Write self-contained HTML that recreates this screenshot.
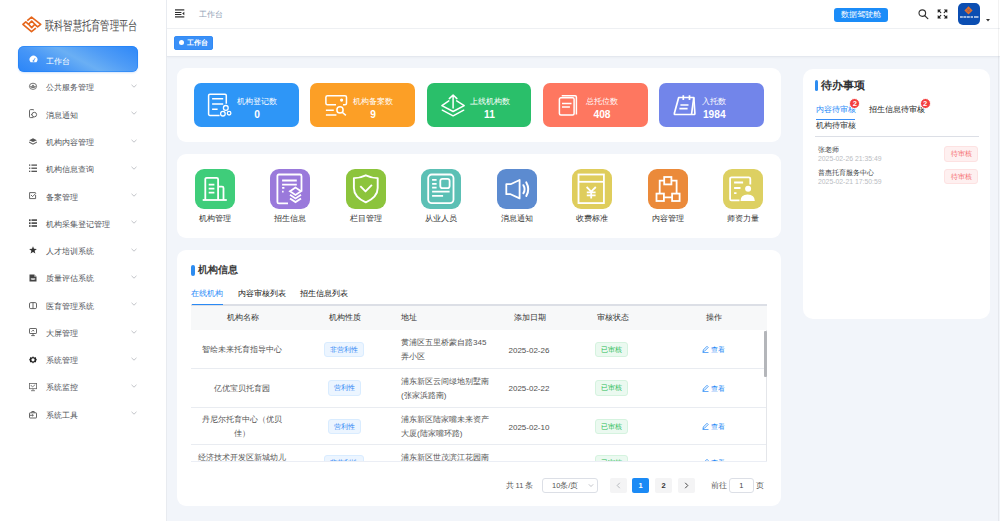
<!DOCTYPE html>
<html><head><meta charset="utf-8">
<style>
*{margin:0;padding:0;box-sizing:border-box}
html,body{width:1000px;height:521px;overflow:hidden;background:#f2f5fa;font-family:"Liberation Sans",sans-serif;color:#606266}
.a{position:absolute}
.t{position:absolute;white-space:nowrap;line-height:1}
/* sidebar */
#side{position:absolute;left:0;top:0;width:167px;height:521px;background:#fff;border-right:1px solid #e8ebf0}
.logo-t{left:45px;top:18.8px;font-size:13px;font-weight:500;color:#4a4a4a;transform:scaleX(0.71);transform-origin:left top;letter-spacing:0px}
.act{left:18px;top:45.8px;width:120px;height:26.5px;border-radius:6px;background:linear-gradient(28deg,#2a85f8 0%,#4696f7 28%,#6aaff4 50%,#4f9cf6 70%,#2d87f8 100%);box-shadow:inset 0 0 0 0.7px rgba(25,125,250,.7),0 1px 2px rgba(30,120,240,.2)}
.mi{position:absolute;left:46px;font-size:8px;color:#505359;font-weight:500;line-height:1;white-space:nowrap}
.chev{position:absolute;left:131px;width:6px;height:6px}
.ic{position:absolute;left:29.1px;width:8px;height:9px}
/* header */
#hdr{position:absolute;left:167px;top:0;width:833px;height:29px;background:#fff;border-bottom:1px solid #eef0f3}
#tags{position:absolute;left:167px;top:29px;width:833px;height:28px;background:#fff;border-bottom:1px solid #e4e8ef;box-shadow:0 1px 2px rgba(0,0,0,.03)}
.card{position:absolute;background:#fff;border-radius:9px}
.stat{position:absolute;top:83px;width:104.5px;height:44px;border-radius:7px}
.stat .sb{position:absolute;left:43px;top:15.1px;text-align:center}
.stat .lb{font-size:8px;color:#fff;line-height:1;white-space:nowrap;height:11.5px}
.stat .v{font-size:10.2px;font-weight:bold;color:#fff;line-height:1;white-space:nowrap}
.stat svg{position:absolute;left:14px;top:11px;overflow:visible}
.ql{position:absolute;top:168.5px;width:40px;height:40px;border-radius:9px}
.ql svg{position:absolute;left:0;top:0}
.qlt{position:absolute;top:215px;width:60px;text-align:center;font-size:8px;color:#333;font-weight:500;line-height:1;white-space:nowrap}
.th{position:absolute;top:313.6px;font-size:7.5px;color:#333;line-height:1;white-space:nowrap;font-weight:500}
.td{position:absolute;font-size:8px;color:#555;line-height:13.7px;white-space:nowrap}
.tg{position:absolute;height:15.5px;border-radius:3px;font-size:7px;line-height:13.5px;text-align:center;white-space:nowrap}
.tgb{background:#ecf5ff;border:1px solid #d9ecff;color:#2f87f5;font-weight:500}
.tgg{background:#ebf9f0;border:1px solid #d5f3df;color:#1fbb55;font-weight:500}
.op{position:absolute;font-size:7px;color:#2689f6;line-height:1;white-space:nowrap}
.rowl{position:absolute;left:191px;width:576px;height:1px;background:#e9ecf1}
.pb{position:absolute;top:477.5px;height:15.5px;width:17px;border-radius:2px;background:#f4f4f5;font-size:7.5px;font-weight:bold;line-height:15.5px;text-align:center;color:#333}
</style></head><body>

<div id="side">
  <svg class="a" style="left:0;top:0" width="50" height="40" viewBox="0 0 50 40"><g fill="none" stroke="#e5661c" stroke-width="1.65" stroke-linejoin="round"><path d="M27.3 20.7L31.5 17.2L40.7 24.4L37.6 26.8L34.8 24.3"/><path d="M35.9 28.05L31.5 31.6L22.9 24.3L25.8 21.9L28.6 24.3"/><path d="M31.7 21.0L34.8 24.3L31.7 27.6L28.6 24.3Z"/></g></svg>
  <div class="t logo-t">联科智慧托育管理平台</div>
  <div class="a act"></div>
  <svg class="a" style="left:28.8px;top:55.3px" width="9" height="8" viewBox="0 0 9 8"><path d="M1.6 7.2A3.9 3.9 0 1 1 7.4 7.2Z" fill="#fff"/><path d="M4.5 5.8L6.1 3.2" stroke="#4a98f6" stroke-width="0.9"/><circle cx="4.5" cy="5.9" r="0.9" fill="#4a98f6"/></svg>
  <div class="mi" style="left:46px;top:56.6px;color:#fff;font-size:8.4px">工作台</div>
  <div class="mi" style="top:84.4px">公共服务管理</div>
  <svg class="chev" style="top:83.1px" viewBox="0 0 6 6"><path d="M0.5 1.8 L3 4.2 L5.5 1.8" fill="none" stroke="#a8abb2" stroke-width="0.7"/></svg>
  <svg class="ic" style="top:83.1px" viewBox="0 0 8 9" width="8" height="9" overflow="visible"><ellipse cx="4" cy="3.3" rx="3.6" ry="3.1" fill="none" stroke="#666" stroke-width="0.9"/><path d="M1 3.3H7V3.8Q4 6.3 1 3.8Z" fill="#666"/><path d="M4 1.5L5.3 3.1H2.7Z" fill="#666"/></svg>
  <div class="mi" style="top:111.7px">消息通知</div>
  <svg class="chev" style="top:110.4px" viewBox="0 0 6 6"><path d="M0.5 1.8 L3 4.2 L5.5 1.8" fill="none" stroke="#a8abb2" stroke-width="0.7"/></svg>
  <svg class="ic" style="top:109.2px" viewBox="0 0 8 9" width="8" height="9" overflow="visible"><g fill="none" stroke="#555" stroke-width="0.9"><path d="M5 1.2L4.2 0.6H1.6Q0.5 0.6 0.5 1.7V7.8Q0.5 8.6 1.4 8.6H4.5"/><circle cx="5.3" cy="5.6" r="2.3"/><path d="M2 5.6H3"/></g></svg>
  <div class="mi" style="top:138.9px">机构内容管理</div>
  <svg class="chev" style="top:137.6px" viewBox="0 0 6 6"><path d="M0.5 1.8 L3 4.2 L5.5 1.8" fill="none" stroke="#a8abb2" stroke-width="0.7"/></svg>
  <svg class="ic" style="top:137.6px" viewBox="0 0 8 9" width="8" height="9" overflow="visible"><path d="M4 0.3L7.9 2.2L4 4.1L0.1 2.2Z" fill="#555"/><path d="M0.1 3.6L4 5.5L7.9 3.6V4.8L4 6.7L0.1 4.8Z" fill="#666"/></svg>
  <div class="mi" style="top:166.2px">机构信息查询</div>
  <svg class="chev" style="top:164.9px" viewBox="0 0 6 6"><path d="M0.5 1.8 L3 4.2 L5.5 1.8" fill="none" stroke="#a8abb2" stroke-width="0.7"/></svg>
  <svg class="ic" style="top:164.1px" viewBox="0 0 8 9" width="8" height="9" overflow="visible"><g fill="#444"><rect x="0" y="0.5" width="1.3" height="1.2"/><rect x="2.4" y="0.5" width="5.6" height="1.2"/><rect x="0" y="3.6" width="1.3" height="1.2"/><rect x="2.4" y="3.6" width="5.6" height="1.2"/><rect x="0" y="6.7" width="1.3" height="1.2"/><rect x="2.4" y="6.7" width="5.6" height="1.2"/></g></svg>
  <div class="mi" style="top:193.5px">备案管理</div>
  <svg class="chev" style="top:192.2px" viewBox="0 0 6 6"><path d="M0.5 1.8 L3 4.2 L5.5 1.8" fill="none" stroke="#a8abb2" stroke-width="0.7"/></svg>
  <svg class="ic" style="top:192.2px" viewBox="0 0 8 9" width="8" height="9" overflow="visible"><g fill="none" stroke="#555" stroke-width="0.9"><path d="M6.6 0.6H0.6V6.6H6.6V3"/><path d="M2 3L3.6 4.6L7 1.2"/></g></svg>
  <div class="mi" style="top:220.7px">机构采集登记管理</div>
  <svg class="chev" style="top:219.4px" viewBox="0 0 6 6"><path d="M0.5 1.8 L3 4.2 L5.5 1.8" fill="none" stroke="#a8abb2" stroke-width="0.7"/></svg>
  <svg class="ic" style="top:219.1px" viewBox="0 0 8 9" width="8" height="9" overflow="visible"><g fill="#444"><rect x="0" y="0.3" width="1.6" height="1.8"/><rect x="2.5" y="0.3" width="5.5" height="1.6"/><rect x="0" y="3.3" width="1.6" height="1.8"/><rect x="2.5" y="3.3" width="5.5" height="1.6"/><rect x="0" y="6.2" width="1.6" height="1.6"/><rect x="2.5" y="6.2" width="5.5" height="1.6"/></g></svg>
  <div class="mi" style="top:248.0px">人才培训系统</div>
  <svg class="chev" style="top:246.7px" viewBox="0 0 6 6"><path d="M0.5 1.8 L3 4.2 L5.5 1.8" fill="none" stroke="#a8abb2" stroke-width="0.7"/></svg>
  <svg class="ic" style="top:246px" viewBox="0 0 8 9" width="8" height="9" overflow="visible"><path d="M4 0.2L5 2.8L7.9 2.9L5.6 4.7L6.4 7.5L4 5.9L1.6 7.5L2.4 4.7L0.1 2.9L3 2.8Z" fill="#333"/></svg>
  <div class="mi" style="top:275.3px">质量评估系统</div>
  <svg class="chev" style="top:274.0px" viewBox="0 0 6 6"><path d="M0.5 1.8 L3 4.2 L5.5 1.8" fill="none" stroke="#a8abb2" stroke-width="0.7"/></svg>
  <svg class="ic" style="top:274.2px" viewBox="0 0 8 9" width="8" height="9" overflow="visible"><path d="M0.5 0.5H5.3L7.5 2.7V7.5H0.5Z" fill="#444"/><path d="M1.8 4.3H6.2V5.6Q4 6.4 1.8 5.6Z" fill="#ddd"/><path d="M5.3 0.5V2.7H7.5" fill="#bbb"/></svg>
  <div class="mi" style="top:302.6px">医育管理系统</div>
  <svg class="chev" style="top:301.3px" viewBox="0 0 6 6"><path d="M0.5 1.8 L3 4.2 L5.5 1.8" fill="none" stroke="#a8abb2" stroke-width="0.7"/></svg>
  <svg class="ic" style="top:301.6px" viewBox="0 0 8 9" width="8" height="9" overflow="visible"><g fill="none" stroke="#555" stroke-width="0.9"><rect x="0.5" y="0.6" width="7" height="6" rx="1.3"/><path d="M4 0.6V6.6"/></g></svg>
  <div class="mi" style="top:329.8px">大屏管理</div>
  <svg class="chev" style="top:328.5px" viewBox="0 0 6 6"><path d="M0.5 1.8 L3 4.2 L5.5 1.8" fill="none" stroke="#a8abb2" stroke-width="0.7"/></svg>
  <svg class="ic" style="top:328.2px" viewBox="0 0 8 9" width="8" height="9" overflow="visible"><g fill="none" stroke="#555" stroke-width="0.9"><rect x="0.5" y="0.5" width="7" height="5" rx="0.6"/><path d="M4 5.5V7.4M2.2 7.6H5.8M2.6 3.6L4 2.2L5.2 3.2"/></g></svg>
  <div class="mi" style="top:357.1px">系统管理</div>
  <svg class="chev" style="top:355.8px" viewBox="0 0 6 6"><path d="M0.5 1.8 L3 4.2 L5.5 1.8" fill="none" stroke="#a8abb2" stroke-width="0.7"/></svg>
  <svg class="ic" style="top:355.8px" viewBox="0 0 8 9" width="8" height="9" overflow="visible"><path d="M4 0.2L5 1.4L6.9 1.3L7.2 3.1L8 3.8L7.2 4.5L6.9 6.3L5 6.2L4 7.4L3 6.2L1.1 6.3L0.8 4.5L0 3.8L0.8 3.1L1.1 1.3L3 1.4Z" fill="#222"/><circle cx="4" cy="3.8" r="1.6" fill="#fff"/></svg>
  <div class="mi" style="top:384.4px">系统监控</div>
  <svg class="chev" style="top:383.1px" viewBox="0 0 6 6"><path d="M0.5 1.8 L3 4.2 L5.5 1.8" fill="none" stroke="#a8abb2" stroke-width="0.7"/></svg>
  <svg class="ic" style="top:382.8px" viewBox="0 0 8 9" width="8" height="9" overflow="visible"><g fill="none" stroke="#666" stroke-width="0.8"><rect x="0.4" y="0.5" width="7.2" height="5.2"/><path d="M4 5.7V7.6M2 7.7H6M1.8 2L3.5 4L6.2 1.6"/></g></svg>
  <div class="mi" style="top:411.6px">系统工具</div>
  <svg class="chev" style="top:410.3px" viewBox="0 0 6 6"><path d="M0.5 1.8 L3 4.2 L5.5 1.8" fill="none" stroke="#a8abb2" stroke-width="0.7"/></svg>
  <svg class="ic" style="top:410.6px" viewBox="0 0 8 9" width="8" height="9" overflow="visible"><g fill="none" stroke="#555" stroke-width="0.9"><rect x="0.5" y="1.8" width="7" height="5.2" rx="0.5"/><path d="M2.8 1.8V0.5H5.2V1.8"/><path d="M1 4.3H4.3M3.3 3.4L4.3 4.3L3.3 5.2"/></g></svg>
</div>


<div id="hdr">
  <svg class="a" style="left:8.1px;top:9px" width="10" height="9" viewBox="0 0 10 9"><g fill="#2b2b2b"><rect x="0" y="0.3" width="9.3" height="1.2"/><rect x="0" y="3" width="6.4" height="1"/><rect x="0" y="5" width="6.4" height="1"/><rect x="0" y="7.3" width="9.3" height="1.2"/><path d="M9.3 2.7L7.2 4.5L9.3 6.3Z"/></g></svg>
  <div class="t" style="left:32px;top:11px;font-size:8px;color:#90a0b5">工作台</div>
  <div class="a" style="left:667.3px;top:7.7px;width:53.5px;height:14.5px;border-radius:3px;background:#1b8cf8"></div>
  <div class="t" style="left:673.5px;top:11px;font-size:8px;color:#fff;font-weight:500">数据驾驶舱</div>
  <svg class="a" style="left:751px;top:9px" width="11" height="11" viewBox="0 0 11 11"><circle cx="4.3" cy="4.1" r="3.3" fill="none" stroke="#333" stroke-width="1.15"/><path d="M6.7 6.6 L9.8 9.6" stroke="#333" stroke-width="1.3" stroke-linecap="round"/></svg>
  <svg class="a" style="left:770px;top:9.3px" width="11" height="10" viewBox="0 0 11 10"><g fill="#222"><path d="M0.6 0.4L4.2 0.6L0.8 4Z"/><path d="M10.4 0.4L6.8 0.6L10.2 4Z"/><path d="M0.6 9.6L4.2 9.4L0.8 6Z"/><path d="M10.4 9.6L6.8 9.4L10.2 6Z"/></g><g stroke="#222" stroke-width="1.1" stroke-linecap="round"><path d="M1.8 1.6L3.8 3.6M9.2 1.6L7.2 3.6M1.8 8.4L3.8 6.4M9.2 8.4L7.2 6.4"/></g></svg>
  <div class="a" style="left:790.5px;top:3px;width:22.3px;height:22.3px;border-radius:5px;background:#0b4eb2"></div>
  <svg class="a" style="left:797px;top:5.8px" width="9" height="9" viewBox="0 0 9 9"><path d="M4.5 0.2 L8.6 4.4 L4.5 8.6 L0.4 4.4Z" fill="#e0702e"/><path d="M2.5 2.4L6.5 6.4M6.5 2.4L2.5 6.4" stroke="#8a5a60" stroke-width="0.5"/><path d="M4.5 2.9L6 4.4L4.5 5.9L3 4.4Z" fill="none" stroke="#9a5a50" stroke-width="0.5"/></svg>
  <svg class="a" style="left:792.5px;top:15.6px" width="19" height="2.5" viewBox="0 0 19 2.5"><g fill="rgba(255,255,255,.6)"><rect x="0" y="0" width="2.8" height="2"/><rect x="3.4" y="0" width="2.6" height="2"/><rect x="6.6" y="0" width="3.2" height="2"/><rect x="10.6" y="0" width="2.4" height="2"/><rect x="14" y="0" width="4.5" height="2"/></g></svg>
  <svg class="a" style="left:819px;top:19.3px" width="4" height="2.5" viewBox="0 0 4 2.5"><path d="M0 0H4L2 2.5Z" fill="#333"/></svg>
</div>
<div id="tags">
  <div class="a" style="left:7.3px;top:6.8px;width:38.5px;height:14.2px;border-radius:3px;background:#3a90f7;box-shadow:inset 0 0 0 0.6px #2b86f5"></div>
  <div class="a" style="left:12px;top:11.2px;width:5px;height:5px;border-radius:50%;background:#fff"></div>
  <div class="t" style="left:20px;top:10.2px;font-size:7.2px;color:#fff;font-weight:bold">工作台</div>
</div>
</div>

<!-- stats card -->
<div class="card" style="left:177px;top:68px;width:603.6px;height:74px"></div>
<div class="stat" style="left:194px;background:#2e96f7">
  <svg width="24" height="24" viewBox="0 0 24 24"><g fill="none" stroke="#fff" stroke-width="1.5"><path d="M11.6 21.4H1.9Q0.6 21.4 0.6 20.1V1.5Q0.6 0.3 1.9 0.3H17Q18.3 0.3 18.3 1.5V9.7"/><path d="M4.1 4.8H15.2M4.1 10H15.2M4.1 15.2H9.6"/><circle cx="17.8" cy="13.9" r="2.4" stroke-width="1.3"/><circle cx="14.9" cy="19.7" r="2.3" stroke-width="1.3"/><circle cx="21.1" cy="19.2" r="1.8" stroke-width="1.3"/></g></svg>
  <div class="sb"><div class="lb">机构登记数</div><div class="v">0</div></div></div>
<div class="stat" style="left:310.2px;background:#fc9f26">
  <svg width="24" height="24" viewBox="0 0 24 24"><g fill="none" stroke="#fff" stroke-width="1.5"><path d="M12 10.7H3.4Q1.9 10.7 1.9 9.2V3.2Q1.9 1.7 3.4 1.7H21Q22.5 1.7 22.5 3.2V9.2Q22.5 10.7 21 10.7H19"/><path d="M1.9 16.2H9.8M1.9 21.1H12.4"/><circle cx="16" cy="15.9" r="3.1"/><path d="M18.2 18.2L21.9 21.4"/></g><circle cx="17.6" cy="6.1" r="1.6" fill="#fff"/></svg>
  <div class="sb"><div class="lb">机构备案数</div><div class="v">9</div></div></div>
<div class="stat" style="left:426.5px;background:#2abf6a">
  <svg width="24" height="24" viewBox="0 0 24 24"><g fill="none" stroke="#fff" stroke-width="1.5" stroke-linejoin="round" stroke-linecap="round"><path d="M7.8 6.9L0.9 11.6L12.1 17.5L23.2 11.6L15.7 6.9"/><path d="M1.3 16.2L12.1 21.8L22.7 16.2"/><path d="M12.1 1.2V13.9M8.3 4.6L12.1 1L15.9 4.6"/></g></svg>
  <div class="sb"><div class="lb">上线机构数</div><div class="v">11</div></div></div>
<div class="stat" style="left:543px;background:#fe7760">
  <svg width="24" height="24" viewBox="0 0 24 24"><g fill="none" stroke="#fff" stroke-width="1.5"><path d="M4.7 1.8H18.2Q19.4 1.8 19.4 3V20.5"/><rect x="2.4" y="3.8" width="14.7" height="17.3" rx="1.5"/><path d="M5 9.4H14.5M5 12.9H12.9"/></g></svg>
  <div class="sb"><div class="lb">总托位数</div><div class="v">408</div></div></div>
<div class="stat" style="left:659.3px;background:#7285ea">
  <svg width="24" height="24" viewBox="0 0 24 24"><g fill="none" stroke="#fff" stroke-width="1.7" stroke-linejoin="round"><path d="M5.7 3.5H20.8L21.9 19.5Q22 20.5 21 20.5H2.2Q1 20.5 1.3 19.5Z"/><path d="M20.8 3.5L18.5 20.5"/><path d="M10.3 1.2V6.1M16.5 1.2V6.1"/><path d="M7.4 11H15.5M6.4 14.6H14.6"/></g></svg>
  <div class="sb"><div class="lb">入托数</div><div class="v">1984</div></div></div>

<!-- quick links card -->
<div class="card" style="left:177px;top:153.8px;width:603.6px;height:84px"></div>
<div class="ql" style="left:194.9px;background:#3fcd7a"><svg width="40" height="40" viewBox="0 0 40 40" class="qi0"><g fill="none" stroke="#fff" stroke-width="1.8"><path d="M10.3 31V10.3Q10.3 8.9 11.7 8.9H21.7Q23.1 8.9 23.1 10.3V31"/><path d="M23.1 17.6H27.1Q28.5 17.6 28.5 19V31"/><path d="M7.7 31H31.8"/><path d="M13.7 15.6H19.4M13.7 19.6H19.4M13.7 23.6H19.4"/></g></svg></div>
<div class="qlt" style="left:184.9px">机构管理</div>
<div class="ql" style="left:270.4px;background:#9a79db"><svg width="40" height="40" viewBox="0 0 40 40" class="qi1"><g fill="none" stroke="#fff" stroke-width="1.8"><path d="M18 34.4H8.9Q7.4 34.4 7.4 32.9V7Q7.4 5.5 8.9 5.5H30Q31.5 5.5 31.5 7V22"/><path d="M12.1 11.5H26.8M12.1 15.6H26.8M12.1 18.9H14.4M12.1 22.6H13.6"/><path d="M25.5 18.5L20 22.2L25.5 25.9L31 22.2Z"/><path d="M20 25.8L25.5 29.5L31 25.8M20 29.4L25.5 33.1L31 29.4"/></g></svg></div>
<div class="qlt" style="left:260.4px">招生信息</div>
<div class="ql" style="left:345.8px;background:#8cc43c"><svg width="40" height="40" viewBox="0 0 40 40" class="qi2"><g fill="none" stroke="#fff" stroke-width="1.9" stroke-linejoin="round"><path d="M19.8 6.3Q14 9.1 7.9 9.1V19Q7.9 28 19.8 33.4Q31.7 28 31.7 19V9.1Q25.6 9.1 19.8 6.3Z"/><path d="M14.3 17.2L19.5 22.4L25.9 15.9"/></g></svg></div>
<div class="qlt" style="left:335.8px">栏目管理</div>
<div class="ql" style="left:421.3px;background:#5cc0b5"><svg width="40" height="40" viewBox="0 0 40 40" class="qi3"><g fill="none" stroke="#fff" stroke-width="1.8"><rect x="7.2" y="5.5" width="25.3" height="28.6" rx="3.5"/><rect x="19.3" y="9.8" width="9.3" height="9.4" rx="2.2"/><path d="M11.1 10.9H15.6M11.1 14.8H15.6M11.1 18.7H15.6M11.1 22.6H28.6M11.1 26.8H22.1"/></g></svg></div>
<div class="qlt" style="left:411.3px">从业人员</div>
<div class="ql" style="left:496.7px;background:#5c8bd0"><svg width="40" height="40" viewBox="0 0 40 40" class="qi4"><g fill="none" stroke="#fff" stroke-width="1.8" stroke-linejoin="round" stroke-linecap="round"><path d="M9.3 15.2H13.6L22.6 11V29.4L13.6 25.2H9.3Z"/><path d="M26.4 16.2Q28.8 20.2 26.4 24.2" stroke-width="2"/><path d="M29.3 13.4Q33.2 20.2 29.3 27" stroke-width="2"/></g></svg></div>
<div class="qlt" style="left:486.7px">消息通知</div>
<div class="ql" style="left:572.2px;background:#dfcd5c"><svg width="40" height="40" viewBox="0 0 40 40" class="qi5"><g fill="none" stroke="#fff" stroke-width="1.8"><rect x="6.5" y="5.5" width="25.4" height="28.6"/><path d="M6.5 12.8H31.9"/><path d="M14.6 18L19.2 22.6L23.8 18M19.2 22.6V29.6M14.8 23.4H23.6M14.8 26.4H23.6" stroke-width="1.8"/></g></svg></div>
<div class="qlt" style="left:562.2px">收费标准</div>
<div class="ql" style="left:647.7px;background:#eb8a3a"><svg width="40" height="40" viewBox="0 0 40 40" class="qi6"><g fill="none" stroke="#fff" stroke-width="1.8"><rect x="16.2" y="8" width="7.2" height="7.4"/><rect x="8.5" y="24.6" width="7.4" height="7.4"/><rect x="24.1" y="24.6" width="7.5" height="7.4"/><path d="M16.2 11.6H11.7V24.6M23.4 11.6H28.6V24.6M15.9 28.3H24.1"/></g></svg></div>
<div class="qlt" style="left:637.7px">内容管理</div>
<div class="ql" style="left:723.1px;background:#ddd062"><svg width="40" height="40" viewBox="0 0 40 40" class="qi7"><g fill="none" stroke="#fff" stroke-width="1.8"><path d="M16.5 31.4H8.6Q7.1 31.4 7.1 29.9V9.8Q7.1 8.3 8.6 8.3H25.8Q27.3 8.3 27.3 9.8V15.5"/><path d="M11.1 13.5H20.1M11.1 19H17.5M11.1 24.2H13.5"/></g><circle cx="25.1" cy="19.7" r="3" fill="#fff"/><path d="M17.5 32Q17.5 25.4 24.6 25.4Q31.8 25.4 31.8 32Z" fill="#fff"/></svg></div>
<div class="qlt" style="left:713.1px">师资力量</div>


<!-- table card -->
<div class="card" style="left:177px;top:250px;width:603.6px;height:256px"></div>
<div class="a" style="left:191px;top:265px;width:3.5px;height:11px;border-radius:2px;background:#2d8cf0"></div>
<div class="t" style="left:197.5px;top:265.3px;font-size:10px;font-weight:bold;color:#3a3a3a">机构信息</div>
<div class="t" style="left:191.3px;top:290.4px;font-size:8px;color:#1f8af8;font-weight:500">在线机构</div>
<div class="t" style="left:237.5px;top:290.4px;font-size:8px;color:#111;font-weight:500">内容审核列表</div>
<div class="t" style="left:299.5px;top:290.4px;font-size:8px;color:#111;font-weight:500">招生信息列表</div>
<div class="a" style="left:191px;top:304px;width:576px;height:1.5px;background:#dcdfe6"></div>
<div class="a" style="left:191.5px;top:303.6px;width:31.5px;height:1.8px;background:#2a8af5"></div>
<div class="a" style="left:191px;top:305.5px;width:576px;height:24px;background:#f7f8f9"></div>
<div class="th" style="left:227.3px">机构名称</div>
<div class="th" style="left:329.4px">机构性质</div>
<div class="th" style="left:401px">地址</div>
<div class="th" style="left:514.3px">添加日期</div>
<div class="th" style="left:596.7px">审核状态</div>
<div class="th" style="left:705.7px">操作</div>
<div class="a" style="left:191px;top:329.5px;width:576px;height:132px;overflow:hidden">
<div class="td" style="left:0;width:102px;text-align:center;top:13.5px">智绘未来托育指导中心</div>
<div class="tg tgb" style="left:132.8px;width:40.5px;top:12.0px">非营利性</div>
<div class="td" style="left:210px;top:6.8px">黄浦区五里桥蒙自路345<br>弄小区</div>
<div class="td" style="left:317.5px;top:14.0px;font-size:8px;color:#505050">2025-02-26</div>
<div class="tg tgg" style="left:403.5px;width:33px;top:12.0px">已审核</div>
<div class="op" style="left:511px;top:15.5px"><svg width="7" height="8" viewBox="0 0 7 8" style="vertical-align:-1px"><path d="M1 7L1.3 5L5 1.3L6.2 2.5L2.5 6.2Z M0.5 7.6H6.5" fill="none" stroke="#2689f6" stroke-width="0.8"/></svg> 查看</div>
<div class="rowl" style="left:0;top:38.6px"></div>
<div class="td" style="left:0;width:102px;text-align:center;top:52.0px">亿优宝贝托育园</div>
<div class="tg tgb" style="left:136.5px;width:33px;top:50.5px">营利性</div>
<div class="td" style="left:210px;top:45.3px">浦东新区云间绿地别墅南<br>(张家浜路南)</div>
<div class="td" style="left:317.5px;top:52.5px;font-size:8px;color:#505050">2025-02-22</div>
<div class="tg tgg" style="left:403.5px;width:33px;top:50.5px">已审核</div>
<div class="op" style="left:511px;top:54.0px"><svg width="7" height="8" viewBox="0 0 7 8" style="vertical-align:-1px"><path d="M1 7L1.3 5L5 1.3L6.2 2.5L2.5 6.2Z M0.5 7.6H6.5" fill="none" stroke="#2689f6" stroke-width="0.8"/></svg> 查看</div>
<div class="rowl" style="left:0;top:77.0px"></div>
<div class="td" style="left:0;width:102px;text-align:center;top:83.8px;white-space:normal">丹尼尔托育中心（优贝<br>佳）</div>
<div class="tg tgb" style="left:136.5px;width:33px;top:89.0px">营利性</div>
<div class="td" style="left:210px;top:83.8px">浦东新区陆家嘴未来资产<br>大厦(陆家嘴环路)</div>
<div class="td" style="left:317.5px;top:91.0px;font-size:8px;color:#505050">2025-02-10</div>
<div class="tg tgg" style="left:403.5px;width:33px;top:89.0px">已审核</div>
<div class="op" style="left:511px;top:92.5px"><svg width="7" height="8" viewBox="0 0 7 8" style="vertical-align:-1px"><path d="M1 7L1.3 5L5 1.3L6.2 2.5L2.5 6.2Z M0.5 7.6H6.5" fill="none" stroke="#2689f6" stroke-width="0.8"/></svg> 查看</div>
<div class="rowl" style="left:0;top:114.8px"></div>
<div class="td" style="left:0;width:102px;text-align:center;top:121.3px;white-space:normal">经济技术开发区新城幼儿<br>园</div>
<div class="tg tgb" style="left:132.8px;width:40.5px;top:125.8px">非营利性</div>
<div class="td" style="left:210px;top:121.3px">浦东新区世茂滨江花园南<br>(潍坊路)</div>
<div class="td" style="left:317.5px;top:129.5px;font-size:8px;color:#505050">2025-02-08</div>
<div class="tg tgg" style="left:403.5px;width:33px;top:125.8px">已审核</div>
<div class="op" style="left:511px;top:128.6px"><svg width="7" height="8" viewBox="0 0 7 8" style="vertical-align:-1px"><path d="M1 7L1.3 5L5 1.3L6.2 2.5L2.5 6.2Z M0.5 7.6H6.5" fill="none" stroke="#2689f6" stroke-width="0.8"/></svg> 查看</div>
<div class="rowl" style="left:0;top:154.0px"></div>
</div>
<div class="a" style="left:766px;top:329.5px;width:1px;height:132px;background:#e4e6ea"></div>
<div class="a" style="left:764.3px;top:330.5px;width:2.5px;height:46px;border-radius:1px;background:#b4b6ba"></div>
<div class="a" style="left:191px;top:461px;width:576px;height:1px;background:#ebeef5"></div>
<!-- pagination -->
<div class="t" style="left:505.5px;top:481.5px;font-size:7.5px;color:#555">共 11 条</div>
<div class="a" style="left:541.5px;top:477.5px;width:56.5px;height:15.5px;border:1px solid #dcdfe6;border-radius:3px;background:#fff"></div>
<div class="t" style="left:552px;top:481.5px;font-size:7.5px;color:#555">10条/页</div>
<svg class="a" style="left:587.5px;top:483px" width="6" height="5" viewBox="0 0 6 5"><path d="M0.8 1.3L3 3.5L5.2 1.3" fill="none" stroke="#a8abb2" stroke-width="0.7"/></svg>
<div class="pb" style="left:610px"><svg width="5" height="7" viewBox="0 0 5 7" style="margin-top:4.2px"><path d="M3.8 0.8L1.2 3.5L3.8 6.2" fill="none" stroke="#b0b3b8" stroke-width="0.9"/></svg></div>
<div class="pb" style="left:632.2px;background:#1b8af5;color:#fff">1</div>
<div class="pb" style="left:655px">2</div>
<div class="pb" style="left:677.8px"><svg width="5" height="7" viewBox="0 0 5 7" style="margin-top:4.2px"><path d="M1.2 0.8L3.8 3.5L1.2 6.2" fill="none" stroke="#333" stroke-width="0.9"/></svg></div>
<div class="t" style="left:711px;top:481.5px;font-size:7.5px;color:#555">前往</div>
<div class="a" style="left:728.5px;top:477.5px;width:25.5px;height:15.5px;border:1px solid #dcdfe6;border-radius:3px;background:#fff;font-size:7.5px;line-height:13.5px;text-align:center;color:#444">1</div>
<div class="t" style="left:756.4px;top:481.5px;font-size:7.5px;color:#555">页</div>

<!-- right card -->
<div class="card" style="left:803.3px;top:68.5px;width:186.7px;height:250px;border-radius:10px"></div>
<div class="a" style="left:815px;top:80px;width:3.4px;height:10.6px;border-radius:2px;background:#2d8cf0"></div>
<div class="t" style="left:821px;top:79.6px;font-size:10.6px;font-weight:bold;color:#303133">待办事项</div>
<div class="t" style="left:815.6px;top:105.9px;font-size:7.9px;color:#1f8af8;font-weight:500">内容待审核</div>
<div class="t" style="left:869px;top:105.9px;font-size:8px;color:#222;font-weight:500">招生信息待审核</div>
<div class="a" style="left:849.4px;top:97.8px;width:11px;height:11px;border-radius:50%;background:#f43f3f;border:1px solid #fff;color:#fff;font-size:7.5px;font-weight:bold;line-height:9px;text-align:center">2</div>
<div class="a" style="left:919.6px;top:97.8px;width:11px;height:11px;border-radius:50%;background:#f43f3f;border:1px solid #fff;color:#fff;font-size:7.5px;font-weight:bold;line-height:9px;text-align:center">2</div>
<div class="a" style="left:815.6px;top:118.6px;width:39.5px;height:1.6px;background:#3a8ef6"></div>
<div class="t" style="left:815.6px;top:121.8px;font-size:8px;color:#303133;font-weight:500">机构待审核</div>
<div class="a" style="left:815px;top:135.5px;width:163.5px;height:1.2px;background:#dcdfe6"></div>
<div class="t" style="left:818px;top:145.9px;font-size:7px;color:#3a3d44">张老师</div>
<div class="t" style="left:818px;top:156.3px;font-size:6.85px;color:#b9bcc2">2025-02-26 21:35:49</div>
<div class="a" style="left:944.4px;top:146px;width:33.6px;height:15.5px;border-radius:3px;background:#fef0f0;border:1px solid #fde2e2;color:#f56c6c;font-size:7px;line-height:13.5px;text-align:center">待审核</div>
<div class="t" style="left:818px;top:168.9px;font-size:7px;color:#3a3d44">普惠托育服务中心</div>
<div class="t" style="left:818px;top:178.9px;font-size:6.85px;color:#b9bcc2">2025-02-21 17:50:59</div>
<div class="a" style="left:944.4px;top:168.6px;width:33.6px;height:15.5px;border-radius:3px;background:#fef0f0;border:1px solid #fde2e2;color:#f56c6c;font-size:7px;line-height:13.5px;text-align:center">待审核</div>
<div class="a" style="left:998px;top:0;width:1px;height:521px;background:rgba(0,0,0,.05)"></div>
</body></html>
